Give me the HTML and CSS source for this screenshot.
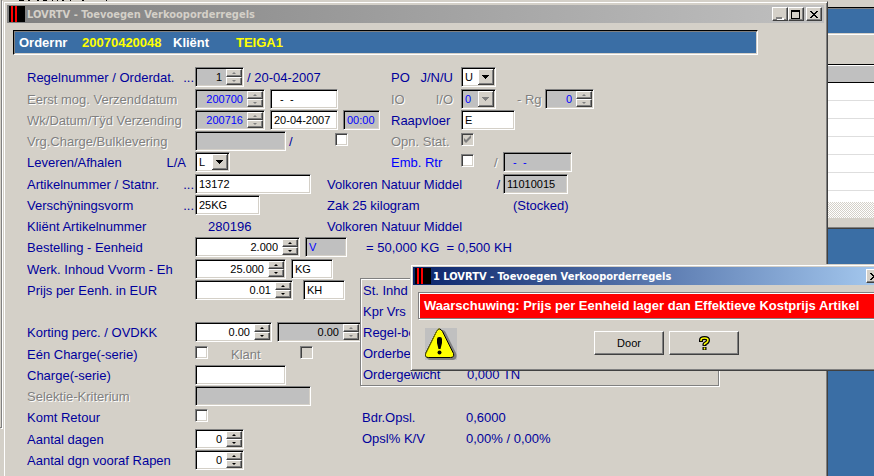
FILE: index.html
```html
<!DOCTYPE html>
<html lang="nl">
<head>
    <meta charset="UTF-8">
    <title>LOVRTV - Toevoegen Verkooporderregels</title>
    <link rel="stylesheet" href="styles.css">
</head>
<body>
    <!-- venster op de achtergrond -->
    <div class="back-window">
        <svg class="back-menu" viewBox="0 0 130 1"><path d="M19 0h5v1h-5zM28 0h2v1h-2zM37 0h2v1h-2zM43 0h4v1h-4zM52 0h1v1h-1zM57 0h1v1h-1zM62 0h2v1h-2zM70 0h1v1h-1zM82 0h2v1h-2zM106 0h1v1h-1z"/></svg>
        <div class="back-bar"></div>
        <div class="back-space"></div>
        <div class="back-head"></div>
        <div class="back-list"></div>
        <div class="back-scroll"></div>
    </div>
    <div class="back-left">
        <div class="back-panel"></div>
    </div>

    <main class="window main-window">
        <div class="titlebar inactive">
            <svg class="app-icon" viewBox="0 0 16 16"><path d="M0 0h16v16H0z"/><path fill="#f00" d="M2 0h2v16H2zM6 0h2v16H6z"/></svg>
            <h1>LOVRTV - Toevoegen Verkooporderregels</h1>
            <button class="win-btn" aria-label="Minimaliseren"><svg viewBox="0 0 12 11"><path fill="#fff" d="M3 9h7v2H3z"/><path fill="#808080" d="M2 8h6v2H2z"/></svg></button>
            <button class="win-btn" aria-label="Maximaliseren"><svg viewBox="0 0 12 11"><path fill-rule="evenodd" d="M1 1h9v9H1zM2 3v6h7V3z"/></svg></button>
            <button class="win-btn close" aria-label="Sluiten"><svg viewBox="0 0 12 11"><path d="M2 2h2v1h1v1h2V3h1V2h2v1H9v1H8v1H7v1h1v1h1v1h1v1H8V8H7V7H5v1H4v1H2V8h1V7h1V6h1V5H4V4H3V3H2z"/></svg></button>
        </div>

        <div class="order-bar">
            <span class="name nr">Ordernr</span><span class="val number">20070420048</span>
            <span class="name client">Kliënt</span><span class="val">TEIGA1</span>
        </div>

        <form class="order-form">
            <div class="row extra">
                <label class="lbl" for="regel">Regelnummer / Orderdat. <span>...</span></label>
                <div class="fields">
                    <span class="spin grey black-text w49"><input id="regel" value="1"><span class="updown off"><button type="button" aria-label="Omhoog"></button><button type="button" aria-label="Omlaag"></button></span></span>
                    <span class="tight">/ 20-04-2007</span>
                </div>
                <div class="side">
                    <label class="side-lbl" for="po">PO <span>J/N/U</span></label>
                    <select id="po"><option>U</option><option>J</option><option>N</option></select>
                </div>
            </div>
            <div class="row">
                <label class="lbl off" for="eerst">Eerst mog. Verzenddatum</label>
                <div class="fields">
                    <span class="spin grey w70"><input id="eerst" value="200700"><span class="updown off"><button type="button" aria-label="Omhoog"></button><button type="button" aria-label="Omlaag"></button></span></span>
                    <input class="box w68" value="&nbsp; -&nbsp; -" aria-label="Eerste verzenddatum">
                </div>
                <div class="side">
                    <label class="side-lbl off" for="io">IO <span>I/O</span></label>
                    <select id="io" disabled><option>0</option></select>
                    <label class="rg off" for="rg">- Rg</label>
                    <span class="spin grey w49"><input id="rg" value="0"><span class="updown off"><button type="button" aria-label="Omhoog"></button><button type="button" aria-label="Omlaag"></button></span></span>
                </div>
            </div>
            <div class="row">
                <label class="lbl off" for="week">Wk/Datum/Tÿd Verzending</label>
                <div class="fields">
                    <span class="spin grey w70"><input id="week" value="200716"><span class="updown off"><button type="button" aria-label="Omhoog"></button><button type="button" aria-label="Omlaag"></button></span></span>
                    <input class="box w68" value="20-04-2007" aria-label="Datum verzending">
                    <input class="box grey w37" value="00:00" aria-label="Tijd verzending">
                </div>
                <div class="side">
                    <label class="side-lbl" for="vloer">Raapvloer</label>
                    <input class="box w54" id="vloer" value="E">
                </div>
            </div>
            <div class="row">
                <label class="lbl off" for="vrg">Vrg.Charge/Bulklevering</label>
                <div class="fields">
                    <input class="box grey w91" id="vrg">
                    <span class="tight bulk">/</span>
                    <input type="checkbox" aria-label="Bulklevering">
                </div>
                <div class="side">
                    <label class="side-lbl off" for="stat">Opn. Stat.</label>
                    <input type="checkbox" id="stat" checked disabled>
                </div>
            </div>
            <div class="row extra">
                <label class="lbl la" for="lever">Leveren/Afhalen <span>L/A</span></label>
                <div class="fields">
                    <select id="lever"><option>L</option><option>A</option></select>
                </div>
                <div class="side">
                    <label class="side-lbl bright" for="emb">Emb. Rtr</label>
                    <input type="checkbox" id="emb">
                    <span class="slash off">/</span>
                    <input class="box grey w69" value="&nbsp; -&nbsp; -" aria-label="Emballage retour datum">
                </div>
            </div>
            <div class="row">
                <label class="lbl" for="artikel">Artikelnummer / Statnr. <span>...</span></label>
                <div class="fields"><input class="box w116" id="artikel" value="13172"></div>
                <div class="desc">
                    <span class="desc-text">Volkoren Natuur Middel <span>/</span></span>
                    <input class="box grey black-text w65" value="11010015" aria-label="Statistieknummer">
                </div>
            </div>
            <div class="row">
                <label class="lbl" for="vorm">Verschÿningsvorm <span>...</span></label>
                <div class="fields"><input class="box w65" id="vorm" value="25KG"></div>
                <div class="desc"><span class="desc-text">Zak 25 kilogram</span><span class="stocked">(Stocked)</span></div>
            </div>
            <div class="row">
                <span class="lbl">Kliënt Artikelnummer</span>
                <div class="fields"><span class="client-nr">280196</span></div>
                <div class="desc">Volkoren Natuur Middel</div>
            </div>
            <div class="row extra">
                <label class="lbl" for="bestel">Bestelling - Eenheid</label>
                <div class="fields">
                    <span class="spin w105"><input id="bestel" value="2.000"><span class="updown"><button type="button" aria-label="Omhoog"></button><button type="button" aria-label="Omlaag"></button></span></span>
                    <input class="box grey w42" value="V" aria-label="Eenheid">
                    <span class="total">= 50,000 KG&nbsp; = 0,500 KH</span>
                </div>
            </div>

            <div class="lower">
                <div class="lower-left">
                    <div class="row">
                        <label class="lbl" for="inhoud">Werk. Inhoud Vvorm - Eh</label>
                        <div class="fields">
                            <span class="spin w91"><input id="inhoud" value="25.000"><span class="updown"><button type="button" aria-label="Omhoog"></button><button type="button" aria-label="Omlaag"></button></span></span>
                            <input class="box w42" value="KG" aria-label="Eenheid inhoud">
                        </div>
                    </div>
                    <div class="row">
                        <label class="lbl" for="prijs">Prijs per Eenh. in EUR</label>
                        <div class="fields wide">
                            <span class="spin w98"><input id="prijs" value="0.01"><span class="updown"><button type="button" aria-label="Omhoog"></button><button type="button" aria-label="Omlaag"></button></span></span>
                            <input class="box w42" value="KH" aria-label="Eenheid prijs">
                        </div>
                    </div>
                    <div class="row"></div>
                    <div class="row extra">
                        <label class="lbl" for="korting">Korting perc. / OVDKK</label>
                        <div class="fields">
                            <span class="spin w77"><input id="korting" value="0.00"><span class="updown"><button type="button" aria-label="Omhoog"></button><button type="button" aria-label="Omlaag"></button></span></span>
                            <span class="spin grey black-text w84"><input value="0.00" aria-label="OVDKK"><span class="updown off"><button type="button" aria-label="Omhoog"></button><button type="button" aria-label="Omlaag"></button></span></span>
                        </div>
                    </div>
                    <div class="row">
                        <label class="lbl" for="een">Eén Charge(-serie)</label>
                        <div class="fields">
                            <input type="checkbox" id="een">
                            <label class="klant off" for="klant">Klant</label>
                            <input type="checkbox" id="klant" disabled>
                        </div>
                    </div>
                    <div class="row">
                        <label class="lbl" for="charge">Charge(-serie)</label>
                        <div class="fields"><input class="box w91" id="charge"></div>
                    </div>
                    <div class="row">
                        <label class="lbl off" for="selektie">Selektie-Kriterium</label>
                        <div class="fields"><input class="box grey w116" id="selektie"></div>
                    </div>
                    <div class="row extra">
                        <label class="lbl" for="retour">Komt Retour</label>
                        <div class="fields"><input type="checkbox" id="retour"></div>
                    </div>
                    <div class="row">
                        <label class="lbl" for="dagen">Aantal dagen</label>
                        <div class="fields"><span class="spin w49"><input id="dagen" value="0"><span class="updown"><button type="button" aria-label="Omhoog"></button><button type="button" aria-label="Omlaag"></button></span></span></div>
                    </div>
                    <div class="row">
                        <label class="lbl" for="rapen">Aantal dgn vooraf Rapen</label>
                        <div class="fields"><span class="spin w49"><input id="rapen" value="0"><span class="updown"><button type="button" aria-label="Omhoog"></button><button type="button" aria-label="Omlaag"></button></span></span></div>
                    </div>
                </div>

                <div class="lower-right">
                    <dl class="totals framed">
                        <dt>St. Inhd</dt><dd></dd>
                        <dt>Kpr Vrs</dt><dd></dd>
                        <dt>Regel-bedrag</dt><dd></dd>
                        <dt>Orderbedrag</dt><dd></dd>
                        <dt>Ordergewicht</dt><dd>0,000 TN</dd>
                    </dl>
                    <dl class="totals surcharge">
                        <dt>Bdr.Opsl.</dt><dd>0,6000</dd>
                        <dt>Opsl% K/V</dt><dd>0,00% / 0,00%</dd>
                    </dl>
                </div>
            </div>
        </form>
    </main>

    <div class="window dialog" role="alertdialog" aria-labelledby="dialogTitle">
        <div class="titlebar active">
            <svg class="app-icon" viewBox="0 0 16 16"><path d="M0 0h16v16H0z"/><path fill="#f00" d="M2 0h2v16H2zM6 0h2v16H6z"/></svg>
            <h2 id="dialogTitle">1 LOVRTV - Toevoegen Verkooporderregels</h2>
            <button class="win-btn close" aria-label="Sluiten"><svg viewBox="0 0 12 11"><path d="M2 2h2v1h1v1h2V3h1V2h2v1H9v1H8v1H7v1h1v1h1v1h1v1H8V8H7V7H5v1H4v1H2V8h1V7h1V6h1V5H4V4H3V3H2z"/></svg></button>
        </div>
        <p class="warning">Waarschuwing: Prijs per Eenheid lager dan Effektieve Kostprijs Artikel</p>
        <div class="dialog-actions">
            <svg class="warn-icon" viewBox="0 0 32 32">
                <path fill="#c0c0c0" d="M0 0h32v32H0z"/>
                <path fill="#808080" d="M17 2q3 0 4 3l10 20q2 6-3 7H5q-2 0-3-2z"/>
                <path fill="#ff0" stroke="#000" d="M11.500 3.500q3-5 6 0l11 22q1 4-3 4h-22q-4 0-3-4z"/>
                <path fill="none" stroke="#808000" d="M.5 26.500l11-23q1.500-3 3-3"/>
                <path d="M12 11q0-2 2.500-2t2.500 2v4l-1.500 6h-2L12 15z"/>
                <circle cx="14.500" cy="24.500" r="2"/>
            </svg>
            <button class="action">Door</button>
            <button class="action" aria-label="Help">
                <svg viewBox="0 0 11 15"><path fill="none" stroke="#000" stroke-width="4" d="M2 6V4q0-2 3.500-2T9 4q0 2-2 3T5.500 9v1M5.500 11v3"/><path fill="none" stroke="#ff0" stroke-width="1.500" d="M2 5V4q0-2 3.500-2T9 4q0 2-2 3T5.500 9M5.500 11.500v2"/></svg>
            </button>
        </div>
    </div>
</body>
</html>
```
FILE: styles.css
```css
* {
    box-sizing: border-box;
}

body {
    margin: 0;
    height: 100vh;
    overflow: hidden;
    position: relative;
    background-color: #3a6ea5;
    font-family: "Liberation Sans", Arial, sans-serif;
    font-size: 13px;
    color: #00009c;
}

/* Achtergrond */
.back-window {
    position: absolute;
    top: 0;
    left: 0;
    right: 0;
    padding-bottom: 10px;
    background-color: #d4d0c8;
    border-bottom: 1px solid #404040;
    box-shadow: inset 0 -1px #808080;
}

.back-menu {
    display: block;
    width: 130px;
    height: 1px;
    margin-bottom: 6px;
}

.back-bar {
    height: 28px;
    background-color: #3a6ea5;
    border-top: 1px solid #000;
    border-bottom: 1px solid #fff;
    box-shadow: inset 0 1px #808080, inset 0 -1px #d4d0c8;
}

.back-space {
    height: 29px;
}

.back-head {
    height: 19px;
    background-color: #c0c0c0;
    border-top: 1px solid #000;
    border-bottom: 1px solid #000;
    box-shadow: inset 0 1px #fff;
}

.back-list {
    height: 119px;
    background: repeating-linear-gradient(#fff 0 17px, #dedede 17px 18px);
}

.back-scroll {
    height: 16px;
    background: repeating-conic-gradient(#fff 0 25%, #d4d0c8 0 50%) 0 0 / 2px 2px;
}

.back-left {
    position: absolute;
    top: 0;
    bottom: 0;
    left: 0;
    width: 4px;
    padding-bottom: 48px;
    background-color: #d4d0c8;
}

.back-panel {
    width: 2px;
    height: 100%;
    border-right: 1px solid #808080;
    border-bottom: 1px solid #808080;
    box-shadow: 1px 1px #fff;
}

/* Vensters */
.window {
    position: absolute;
    background-color: #d4d0c8;
    border: 1px solid;
    border-color: #d4d0c8 #404040 #404040 #d4d0c8;
    box-shadow: inset 1px 1px #fff, inset -1px -1px #808080;
}

.main-window {
    top: 1px;
    left: 3px;
    right: 46px;
    bottom: -8px;
    padding: 3px;
}

.dialog {
    top: 264px;
    left: 410px;
    right: -13px;
    padding: 2px 2px 10px;
}

.titlebar {
    display: flex;
    align-items: center;
    height: 18px;
    padding: 0 2px;
}

.inactive {
    background: linear-gradient(90deg, #808080, #c0c0c0);
    color: #d4d0c8;
}

.active {
    background: linear-gradient(90deg, #0a246a, #a6caf0);
    color: #fff;
}

.app-icon {
    width: 16px;
    height: 16px;
    margin-right: 2px;
}

.titlebar h1, .titlebar h2 {
    flex: 1;
    margin: 0;
    font-family: "DejaVu Sans Condensed", "DejaVu Sans", sans-serif;
    font-size: 11px;
    font-weight: bold;
    white-space: nowrap;
}

.win-btn, .action, .updown button {
    padding: 0;
    background-color: #d4d0c8;
    border: 1px solid;
    border-color: #fff #404040 #404040 #fff;
    box-shadow: inset -1px -1px #808080;
}

.win-btn {
    width: 16px;
    height: 14px;
}

.win-btn svg {
    display: block;
    width: 12px;
    height: 11px;
    margin: 0 1px;
}

.close {
    margin-left: 2px;
}

.order-bar {
    display: flex;
    align-items: center;
    height: 25px;
    margin: 7px 66px 12px 6px;
    padding-left: 5px;
    background-color: #3a6ea5;
    border: 1px solid;
    border-color: #000 #fff #fff #000;
    box-shadow: inset 1px 1px #808080, inset -1px -1px #d4d0c8;
    font-weight: bold;
}

.name {
    color: #fff;
}

.val {
    color: #ff0;
}

.nr, .client {
    width: 63px;
}

.number {
    width: 91px;
}

/* Formulier */
.order-form {
    padding-left: 20px;
    white-space: nowrap;
}

.row {
    display: grid;
    grid-template-columns: 168px 132px 64px 1fr;
    height: 21px;
    line-height: 22px;
}

.extra {
    margin-bottom: 1px;
}

.lbl, .side-lbl, .desc-text {
    display: flex;
    justify-content: space-between;
    padding-right: 1px;
}

.la {
    padding-right: 9px;
}

.off {
    color: #808080;
    text-shadow: 1px 1px #fff;
}

.bright {
    color: #0000ff;
}

.fields {
    display: flex;
    grid-column: 2 / 4;
    gap: 5px;
}

.wide {
    gap: 10px;
}

.tight {
    margin-left: -2px;
}

.bulk {
    width: 41px;
}

.side {
    display: flex;
    grid-column: 4;
}

.side-lbl {
    width: 70px;
    padding-right: 8px;
}

.rg {
    width: 49px;
    padding-left: 21px;
}

.slash {
    width: 29px;
    padding-left: 20px;
}

.desc {
    display: flex;
    grid-column: 3 / 5;
}

.row:has(.desc) .fields {
    grid-column: 2;
}

.desc-text {
    width: 176px;
    padding-right: 3px;
}

.stocked {
    margin-left: 10px;
}

.client-nr {
    margin-left: 13px;
}

.total {
    margin-left: 14px;
}

.klant {
    width: 70px;
    margin-left: 18px;
    margin-right: -6px;
}

.box, .spin, select {
    flex: none;
    height: 20px;
    margin: 0;
    padding: 0 3px;
    background-color: #fff;
    border: 1px solid;
    border-color: #808080 #fff #fff #808080;
    border-radius: 0;
    box-shadow: inset 1px 1px #000, inset -1px -1px #d4d0c8;
    font-family: inherit;
    font-size: 11px;
    color: #000;
}

.grey {
    background-color: #c0c0c0;
    color: #0000ff;
}

.black-text {
    color: #000;
}

.spin {
    display: flex;
    padding: 1px;
}

.spin input {
    flex: 1;
    width: 0;
    padding: 0 4px 0 0;
    border: 0;
    background: none;
    font: inherit;
    color: inherit;
    text-align: right;
}

.updown {
    display: flex;
    flex-direction: column;
    width: 16px;
}

.updown button {
    display: flex;
    justify-content: center;
    align-items: center;
    height: 8px;
}

.updown button::before {
    content: "";
    border: 2px solid transparent;
    border-top-width: 0;
    border-bottom-color: #000;
}

.updown button + button::before {
    border-width: 2px 2px 0;
    border-top-color: #000;
}

.updown.off button::before {
    border-bottom-color: #808080;
}

.updown.off button + button::before {
    border-top-color: #808080;
}

select {
    appearance: none;
    width: 35px;
    background: #fff url("data:image/svg+xml,%3Csvg xmlns='http://www.w3.org/2000/svg' width='16' height='16'%3E%3Cpath fill='%23404040' d='M0 0h16v16H0z'/%3E%3Cpath fill='%23fff' d='M0 0h15v15H0z'/%3E%3Cpath fill='%23808080' d='M1 1h14v14H1z'/%3E%3Cpath fill='%23d4d0c8' d='M1 1h13v13H1z'/%3E%3Cpath d='M4 6h7v1h-1v1H9v1H8v1H7V9H6V8H5V7H4z'/%3E%3C/svg%3E") right 1px top 1px no-repeat;
}

select:disabled {
    background-color: #c0c0c0;
    background-image: url("data:image/svg+xml,%3Csvg xmlns='http://www.w3.org/2000/svg' width='16' height='16'%3E%3Cpath fill='%23404040' d='M0 0h16v16H0z'/%3E%3Cpath fill='%23fff' d='M0 0h15v15H0z'/%3E%3Cpath fill='%23808080' d='M1 1h14v14H1z'/%3E%3Cpath fill='%23d4d0c8' d='M1 1h13v13H1z'/%3E%3Cpath fill='%23808080' d='M4 6h7v1h-1v1H9v1H8v1H7V9H6V8H5V7H4z'/%3E%3C/svg%3E");
    color: #0000ff;
    opacity: 1;
}

input[type="checkbox"] {
    appearance: none;
    flex: none;
    width: 13px;
    height: 13px;
    margin: 2px 0 0;
    background-color: #fff;
    border: 1px solid;
    border-color: #808080 #fff #fff #808080;
    box-shadow: inset 1px 1px #404040, inset -1px -1px #d4d0c8;
}

input[type="checkbox"]:disabled {
    background-color: #d4d0c8;
}

input[type="checkbox"]:checked {
    background-image: url("data:image/svg+xml,%3Csvg xmlns='http://www.w3.org/2000/svg' width='11' height='11'%3E%3Cpath fill='%23808080' d='M2 4l2 2 5-5v3L4 9 2 7z'/%3E%3C/svg%3E");
}

.w37 { width: 37px; }
.w42 { width: 42px; }
.w49 { width: 49px; }
.w54 { width: 54px; }
.w65 { width: 65px; }
.w68 { width: 68px; }
.w69 { width: 69px; }
.w70 { width: 70px; }
.w77 { width: 77px; }
.w84 { width: 84px; }
.w91 { width: 91px; }
.w98 { width: 98px; }
.w105 { width: 105px; }
.w116 { width: 116px; }

.lower {
    display: flex;
}

.lower-left {
    width: 333px;
}

.lower-right {
    flex: 1;
    max-width: 359px;
    padding-top: 19px;
}

.totals {
    display: grid;
    grid-template-columns: 104px 1fr;
    grid-auto-rows: 21px;
    margin: 0;
    padding-left: 2px;
    line-height: 22px;
}

.totals dd {
    margin: 0;
}

.framed {
    position: relative;
    padding-top: 1px;
    background-color: #d4d0c8;
    border: 1px solid #808080;
    box-shadow: 1px 1px #fff, inset 1px 1px #fff;
}

.surcharge {
    margin-top: 21px;
}

/* Melding */
.warning {
    margin: 7px 5px 0;
    padding: 0 5px;
    background-color: #f00;
    border: 1px solid #808080;
    box-shadow: 1px 1px #fff, inset 1px 1px #fff;
    font-weight: bold;
    line-height: 25px;
    color: #fff;
    white-space: nowrap;
}

.dialog-actions {
    display: flex;
    align-items: flex-start;
    gap: 5px;
    padding: 9px 12px 0;
}

.warn-icon {
    width: 32px;
    height: 32px;
    margin-right: 132px;
}

.action {
    width: 70px;
    height: 24px;
    margin-top: 3px;
    font-family: inherit;
    font-size: 11px;
}

.action svg {
    display: block;
    width: 11px;
    height: 15px;
    margin: 0 auto;
}
```
